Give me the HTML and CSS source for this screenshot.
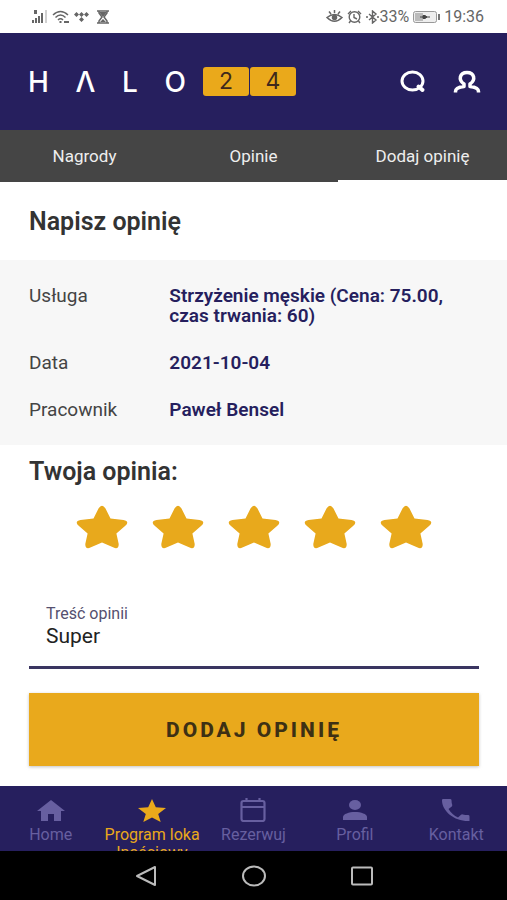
FILE: index.html
```html
<!DOCTYPE html>
<html lang="pl">
<head>
<meta charset="utf-8">
<meta name="viewport" content="width=device-width, initial-scale=1">
<title>Napisz opinię</title>
<link rel="stylesheet" href="styles.css">
</head>
<body>
<svg class="symbols" aria-hidden="true">
  <symbol id="star" viewBox="0 0 52 44">
    <path d="M22.5 3.4Q26-1.8 29.5 3.4L34.5 13.6L47.5 15Q54 16.5 49.3 20.8L40.4 28.5L42.7 39Q42.8 44.6 37.6 42.6L26 37.5L14.4 42.6Q9.2 44.6 9.3 39L11.6 28.5L2.7 20.8Q-2 16.5 4.5 15L17.5 13.6Z" fill="currentColor"/>
  </symbol>
</svg>

<div class="status">
  <div class="status-group">
    <svg width="16" height="14" viewBox="0 0 16 14" fill="currentColor"><path d="M0 10h2v3H0zM3 8h2v5H3zM6 6h2v7H6zM9 3h2v10H9zM2 0h3v4H2z"/><path d="M13 0h2v13h-2z" opacity=".3"/></svg>
    <svg width="18" height="14" viewBox="0 0 18 14" fill="none" stroke="currentColor" stroke-width="1.5"><path d="M1 5Q8.500-2 16 5M3.500 7.500Q8.500 2.500 13.500 7.500M6 10Q8.500 7.500 11 10"/><path d="M7.500 12h2M12 12h5" stroke-width="2"/></svg>
    <svg width="15" height="10" viewBox="0 0 15 10" fill="currentColor"><path d="M2.500 0L5 2.500 2.500 5 0 2.500zM7.500 0L10 2.500 7.500 5 5 2.500zM12.500 0L15 2.500 12.500 5 10 2.500zM7.500 5L10 7.500 7.500 10 5 7.500z"/></svg>
    <svg class="hourglass" width="12" height="14" viewBox="0 0 12 14"><path d="M0 1h12M0 13h12M2 1v2l3 4-3 4v2M10 1v2L7 7l3 4v2" fill="none" stroke="currentColor" stroke-width="1.500"/><path d="M2 2h8L6 7zM3 12l3-3 3 3z" fill="currentColor"/></svg>
  </div>
  <div class="status-group">
    <svg width="17" height="13" viewBox="0 0 17 13" fill="none" stroke="currentColor" stroke-width="1.500"><path d="M1 7.500Q8.500 1.500 16 7.500Q8.500 15 1 7.500zM8.500 0v3M3 1.500l2 2.500M14 1.500L12 4"/><circle cx="8.500" cy="7.500" r="2" fill="currentColor"/></svg>
    <svg class="alarm" width="15" height="14" viewBox="0 0 15 14" fill="none" stroke="currentColor" stroke-width="1.400"><circle cx="7.500" cy="7" r="5.300"/><path d="M7 4v3.500l3 1.500M1 4l3-3M14 4l-3-3M3.500 11L2 13M11.500 11l1.500 2"/></svg>
    <svg width="13" height="14" viewBox="0 0 13 14" fill="none" stroke="currentColor" stroke-width="1.400"><path d="M3 4l7 6-3.500 3V1L10 4l-7 6M0 7h2M11 7h2"/></svg>
    <span>33%</span>
    <svg class="battery" width="27" height="12" viewBox="0 0 27 12"><rect x=".5" y=".5" width="23" height="11" rx="2" fill="#eee" stroke="#999"/><path d="M2 2h8v8H2z" fill="#bbb"/><path d="M7 6h10M10 4.500h2L14 6l-2 1.500h-2z" fill="#444" stroke="#444"/><path d="M25 3h2v6h-2z" fill="#777"/></svg>
    <time>19:36</time>
  </div>
</div>

<header class="header">
  <a class="logo" href="#">
    <span class="logo-word"><span>H</span><span>Λ</span><span>L</span><span>O</span></span>
    <span class="logo-tiles"><span>2</span><span>4</span></span>
  </a>
  <div class="header-actions">
    <button type="button" aria-label="Szukaj"><svg width="28" height="26" viewBox="0 0 28 26" fill="none" stroke="#fff" stroke-width="3"><ellipse cx="13.500" cy="12" rx="10.500" ry="9"/><path d="M19.500 17.500l4 3.500" stroke-width="4" stroke-linecap="round"/></svg></button>
    <button type="button" aria-label="Konto"><svg width="28" height="26" viewBox="0 0 28 26" fill="none" stroke="#fff" stroke-width="3.500" stroke-linejoin="round"><path d="M2.500 23.500v-1c0-3.500 3-4.500 8.500-5v-2.500C5 11 6.500 3.500 14 3.500S23 11 17 15v2.500c5.500.500 8.500 1.500 8.500 5v1"/></svg></button>
  </div>
</header>

<nav class="tabs">
  <a href="#">Nagrody</a>
  <a href="#">Opinie</a>
  <a class="active" href="#">Dodaj opinię</a>
</nav>

<main>
  <h1>Napisz opinię</h1>
  <dl class="details">
    <dt>Usługa</dt><dd>Strzyżenie męskie (Cena: 75.00, czas trwania: 60)</dd>
    <dt>Data</dt><dd>2021-10-04</dd>
    <dt>Pracownik</dt><dd>Paweł Bensel</dd>
  </dl>
  <form class="review">
    <h2>Twoja opinia:</h2>
    <div class="rating">
      <button type="button" aria-label="1"><svg><use href="#star"/></svg></button>
      <button type="button" aria-label="2"><svg><use href="#star"/></svg></button>
      <button type="button" aria-label="3"><svg><use href="#star"/></svg></button>
      <button type="button" aria-label="4"><svg><use href="#star"/></svg></button>
      <button type="button" aria-label="5"><svg><use href="#star"/></svg></button>
    </div>
    <div class="field">
      <label for="content">Treść opinii</label>
      <textarea id="content" rows="1">Super</textarea>
    </div>
    <button class="submit" type="button">DODAJ OPINIĘ</button>
  </form>
</main>

<nav class="bottom-nav">
  <a href="#"><svg viewBox="0 0 28 24" fill="currentColor"><path d="M14 2L0 13h4v10h7v-7h6v7h7V13h4z"/></svg><span>Home</span></a>
  <a class="active" href="#"><svg viewBox="0 0 28 24" fill="currentColor"><path d="M14 1l3.800 8.200L28 10l-7.800 6 2.500 8L14 19.500 5.300 24l2.500-8L0 10l10.200-.8z"/></svg><span>Program loka<br>lnościowy</span></a>
  <a href="#"><svg viewBox="0 0 28 24" fill="none" stroke="currentColor" stroke-width="2.200"><rect x="2.500" y="3" width="23" height="20" rx="2"/><path d="M2.500 9h23M7.500 0v4M20.500 0v4"/></svg><span>Rezerwuj</span></a>
  <a href="#"><svg viewBox="0 0 28 24" fill="currentColor"><ellipse cx="14" cy="7" rx="6" ry="5"/><path d="M2 22v-3c0-3 6-5 12-5s12 2 12 5v3z"/></svg><span>Profil</span></a>
  <a href="#"><svg viewBox="0 0 28 24" fill="currentColor"><path d="M1 1h7q1.500 0 1.500 1.300 0 2.500.8 4.700 0 1-.5 1.400L6.500 11c2.500 4 5.500 6.500 9.500 8.500l3-2.800q.8-.6 1.700-.3 2.600.7 5.300.7 1.500 0 1.500 1.400V23H26C12 23 0 13 0 2.200Q0 1 1 1z"/></svg><span>Kontakt</span></a>
</nav>

<div class="system-bar">
  <button type="button" aria-label="Wstecz"><svg width="24" height="24" viewBox="0 0 24 24"><path d="M3 12L21 3v18z"/></svg></button>
  <button type="button" aria-label="Ekran główny"><svg width="26" height="24" viewBox="0 0 26 24"><ellipse cx="13" cy="12" rx="11" ry="9.500"/></svg></button>
  <button type="button" aria-label="Ostatnie"><svg width="24" height="24" viewBox="0 0 24 24"><rect x="2" y="3.500" width="20" height="17" rx="1"/></svg></button>
</div>
</body>
</html>
```

FILE: styles.css
```css
* { box-sizing: border-box; }

body {
  margin: 0;
  min-height: 100vh;
  display: flex;
  flex-direction: column;
  background: #fff;
  color: #333;
  font: 19px/20px Roboto, "Liberation Sans", sans-serif;
}

button {
  padding: 0;
  border: 0;
  background: none;
  color: inherit;
  font: inherit;
}

a { color: inherit; text-decoration: none; }
svg { display: block; flex: none; }
.symbols { position: absolute; width: 0; height: 0; }

.status {
  height: 33px;
  padding: 0 23px 0 32px;
  display: flex;
  align-items: center;
  justify-content: space-between;
  color: #666;
  font-size: 16px;
}

.status-group { display: flex; align-items: center; gap: 4px; }
.hourglass { margin-left: 4px; }
.status-group span { margin-left: -4px; }

.header {
  height: 97px;
  padding: 0 26px 0 28px;
  display: flex;
  align-items: center;
  justify-content: space-between;
  background: #261f5e;
}

.logo {
  display: flex;
  align-items: center;
  gap: 17px;
  color: #fff;
  font-family: Inter, sans-serif;
}

.logo-word {
  width: 158px;
  display: flex;
  justify-content: space-between;
  font-size: 28px;
  font-weight: 500;
  line-height: 30px;
}

.logo-tiles {
  display: flex;
  gap: 1px;
  color: #40291c;
  font-size: 23px;
  font-weight: 400;
}

.logo-tiles span {
  width: 46px;
  height: 29px;
  line-height: 29px;
  text-align: center;
  background: #eaa91b;
  border-radius: 3px;
}

.header-actions { display: flex; gap: 26px; }

.tabs {
  display: grid;
  grid-template-columns: repeat(3, 1fr);
  height: 52px;
  background: #454545;
  color: #eee;
  font-size: 17px;
  text-align: center;
}

.tabs a { padding-top: 16px; border-bottom: 2px solid #454545; }
.tabs .active { border-bottom-color: #fff; }

h1, h2 {
  margin: 0;
  font-size: 25px;
  line-height: 28px;
  font-weight: 600;
}

h1 { padding: 26px 29px 24px; }

.details {
  margin: 0;
  padding: 26px 29px 25px;
  display: grid;
  grid-template-columns: 5fr 11fr;
  row-gap: 27px;
  background: #f7f7f7;
  color: #444;
}

.details dd { margin: 0; padding-right: 16px; color: #261f5e; font-weight: 600; }

.review {
  padding: 13px 28px 20px 29px;
  display: flex;
  flex-direction: column;
}

.rating {
  margin-top: 19px;
  display: flex;
  justify-content: center;
  gap: 24px;
  color: #e8a91c;
}

.rating svg { width: 52px; height: 44px; }

.field {
  margin-top: 55px;
  padding: 0 17px;
  height: 65px;
  border-bottom: 3px solid #3a3561;
  display: flex;
  flex-direction: column;
}

.field label { color: #55506f; font-size: 16px; line-height: 20px; }

.field textarea {
  width: 100%;
  padding: 0;
  border: 0;
  outline: 0;
  resize: none;
  overflow: hidden;
  background: none;
  color: #222;
  font: 21px/24px Roboto, "Liberation Sans", sans-serif;
}

.submit {
  margin-top: 24px;
  height: 73px;
  background: #e9a91c;
  color: #3d3014;
  font-size: 21px;
  font-weight: 800;
  letter-spacing: 3px;
  box-shadow: 0 1px 3px #9999;
}

.bottom-nav {
  margin-top: auto;
  height: 65px;
  padding-top: 12px;
  overflow: hidden;
  display: grid;
  grid-template-columns: repeat(5, 1fr);
  background: #261f5e;
  color: #675fa0;
  font-size: 16px;
  line-height: 18px;
  text-align: center;
  white-space: nowrap;
}

.bottom-nav a { display: flex; flex-direction: column; align-items: center; gap: 4px; }
.bottom-nav svg { width: 28px; height: 24px; }
.bottom-nav .active { color: #eaa91b; }

.system-bar {
  height: 49px;
  display: flex;
  align-items: center;
  justify-content: center;
  gap: 83px;
  background: #000;
}

.system-bar svg { fill: none; stroke: #bbb; stroke-width: 2; stroke-linejoin: round; }
```
